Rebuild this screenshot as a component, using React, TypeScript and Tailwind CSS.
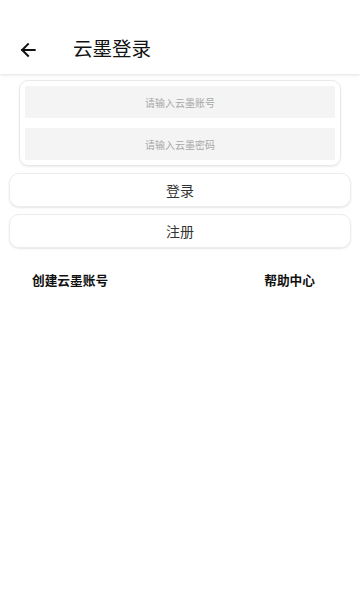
import React from "react";

export default function App() {
  const font = { fontFamily: '"Noto Sans CJK SC", "Noto Sans", sans-serif' };
  return (
    <div className="w-[360px] h-[600px] bg-white relative" style={font}>
      <div className="h-[74px] bg-white flex items-end pb-[14px] shadow-[0_1px_3px_rgba(0,0,0,0.12)] relative z-10">
        <div className="w-[73px] flex justify-start pl-[18px] items-center">
          <svg width="20" height="20" viewBox="0 0 24 24" fill="none" stroke="#111" strokeWidth="2.4" strokeLinecap="square" strokeLinejoin="miter">
            <path d="M20 12H5" />
            <path d="M12 5l-7 7 7 7" />
          </svg>
        </div>
        <div className="text-[19.5px] leading-[24px] text-[#111]">云墨登录</div>
      </div>
      <div className="px-[19px] pt-[6px]">
        <div className="rounded-[9px] border border-[#e8e8e8] shadow-[0_1px_2px_rgba(0,0,0,0.08)] px-[5px] py-[5px] flex flex-col gap-[10px]">
          <div className="h-[32px] bg-[#f4f4f4] flex items-center justify-center text-[10px] text-[#a8a8a8]">请输入云墨账号</div>
          <div className="h-[32px] bg-[#f4f4f4] flex items-center justify-center text-[10px] text-[#a8a8a8]">请输入云墨密码</div>
        </div>
      </div>
      <div className="px-[9px] pt-[7px] flex flex-col gap-[7px]">
        <div className="h-[34px] rounded-[10px] border border-[#ececec] shadow-[0_1px_2px_rgba(0,0,0,0.1)] flex items-center justify-center text-[14px] text-[#333]">登录</div>
        <div className="h-[34px] rounded-[10px] border border-[#ececec] shadow-[0_1px_2px_rgba(0,0,0,0.1)] flex items-center justify-center text-[14px] text-[#333]">注册</div>
      </div>
      <div className="flex justify-between pl-[32px] pr-[45px] pt-[22px] text-[12.7px] font-bold text-[#111]">
        <span>创建云墨账号</span>
        <span>帮助中心</span>
      </div>
    </div>
  );
}
